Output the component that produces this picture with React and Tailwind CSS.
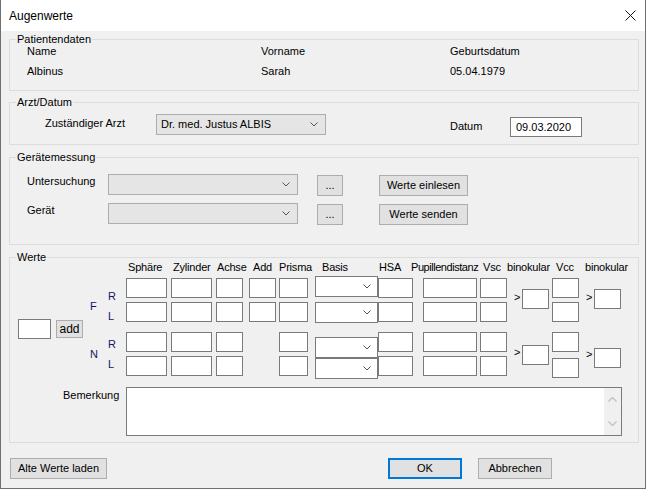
import React from 'react';

const Box = ({ className = '' }) => (
  <div className={`h-[20px] border border-[#7a7a7a] bg-white ${className}`} />
);

function Chevron({ color = '#555555' }) {
  return (
    <svg width="8" height="5" viewBox="0 0 8 5" className="shrink-0">
      <path d="M0.5 0.5 L4 4 L7.5 0.5" fill="none" stroke={color} strokeWidth="1" />
    </svg>
  );
}

function Combo({ className = '', children }) {
  // grey dropdown (WinForms ComboBox, DropDownList style)
  return (
    <div className={`flex items-center justify-between border border-[#adadad] bg-[#e5e5e5] pl-[4px] pr-[7px] ${className}`}>
      <span className="truncate">{children}</span>
      <Chevron />
    </div>
  );
}

function WhiteCombo({ className = '' }) {
  return (
    <div className={`flex h-[21px] w-[63px] items-center justify-end border border-[#7a7a7a] bg-white pr-[6px] ${className}`}>
      <Chevron />
    </div>
  );
}

function Btn({ className = '', children }) {
  return (
    <button className={`flex items-center justify-center border border-[#adadad] bg-[#e1e1e1] leading-[13px] ${className}`}>
      {children}
    </button>
  );
}

function Group({ label, className = '', children }) {
  return (
    <div className={`relative ml-[8px] w-[630px] border border-[#dcdcdc] ${className}`}>
      <span className="absolute -top-[7px] left-[6px] bg-[#f0f0f0] px-[1px] leading-[13px]">{label}</span>
      {children}
    </div>
  );
}

const HEADERS = [
  ['Sphäre', 'w-[45px]'],
  ['Zylinder', 'w-[44px]'],
  ['Achse', 'w-[36px]'],
  ['Add', 'w-[26px]'],
  ['Prisma', 'w-[43px]'],
  ['Basis', 'w-[57px]'],
  ['HSA', 'w-[32px]'],
  ['Pupillendistanz', 'w-[72px] tracking-[-0.45px]'],
  ['Vsc', 'w-[24px]'],
  ['binokular', 'w-[49px]'],
  ['Vcc', 'w-[29px]'],
  ['binokular', 'w-[40px]'],
];

// four-row column of text boxes (F R, F L, N R, N L)
function Col4({ className }) {
  return (
    <div className={`flex flex-col ${className}`}>
      <Box className="mt-[2px]" />
      <Box className="mt-[4px]" />
      <Box className="mt-[10px]" />
      <Box className="mt-[4px]" />
    </div>
  );
}

function Werte() {
  return (
    <>
      <div className="mt-[3px] flex whitespace-nowrap leading-[13px] tracking-[-0.2px]">
        <div className="w-[118px]" />
        {HEADERS.map(([h, w], i) => (
          <span key={i} className={w}>{h}</span>
        ))}
      </div>

      <div className="mt-[2px] flex h-[103px]">
        <div className="ml-[8px] mt-[43px] h-[20px] w-[33px] border border-[#7a7a7a] bg-white" />
        <Btn className="ml-[5px] mt-[44px] h-[18px] w-[27px] text-[12px]">add</Btn>

        <div className="ml-[7px] flex w-[18px] flex-col leading-[13px] text-[#15156a]">
          <span className="mt-[24px]">F</span>
          <span className="mt-[35px]">N</span>
        </div>
        <div className="flex w-[18px] flex-col leading-[13px] text-[#15156a]">
          <span className="mt-[14px]">R</span>
          <span className="mt-[7px]">L</span>
          <span className="mt-[15px]">R</span>
          <span className="mt-[7px]">L</span>
        </div>

        <Col4 className="w-[41px]" />
        <Col4 className="ml-[4px] w-[41px]" />
        <Col4 className="ml-[4px] w-[27px]" />
        <div className="ml-[6px] flex w-[27px] flex-col">
          <Box className="mt-[2px]" />
          <Box className="mt-[4px]" />
        </div>
        <Col4 className="ml-[3px] w-[29px]" />
        <div className="ml-[7px] flex w-[63px] flex-col">
          <WhiteCombo />
          <WhiteCombo className="mt-[5px]" />
          <WhiteCombo className="mt-[14px]" />
          <WhiteCombo />
        </div>
        <Col4 className="w-[35px]" />
        <Col4 className="ml-[10px] w-[54px]" />
        <Col4 className="ml-[3px] w-[27px]" />

        <div className="flex w-[15px] flex-col pl-[7px] leading-[13px]">
          <span className="mt-[15px]">&gt;</span>
          <span className="mt-[42px]">&gt;</span>
        </div>
        <div className="flex w-[27px] flex-col">
          <Box className="mt-[13px]" />
          <Box className="mt-[36px]" />
        </div>
        <div className="ml-[3px] flex w-[27px] flex-col">
          <Box className="mt-[2px]" />
          <Box className="mt-[4px]" />
          <Box className="mt-[10px]" />
          <Box className="mt-[6px]" />
        </div>
        <div className="flex w-[15px] flex-col pl-[7px] leading-[13px]">
          <span className="mt-[15px]">&gt;</span>
          <span className="mt-[44px]">&gt;</span>
        </div>
        <div className="flex w-[27px] flex-col">
          <Box className="mt-[13px]" />
          <Box className="mt-[39px]" />
        </div>
      </div>

      <div className="mt-[8px] flex">
        <span className="ml-[53px] mt-[2px] w-[63px] leading-[13px]">Bemerkung</span>
        <div className="flex h-[49px] w-[496px] justify-end border border-[#7a7a7a] bg-white">
          <div className="flex w-[17px] flex-col items-center justify-between bg-[#f0f0f0] py-[9px]">
            <svg width="9" height="5" viewBox="0 0 9 5">
              <path d="M0.5 4.5 L4.5 0.5 L8.5 4.5" fill="none" stroke="#c2c2c2" strokeWidth="1.4" />
            </svg>
            <svg width="9" height="5" viewBox="0 0 9 5">
              <path d="M0.5 0.5 L4.5 4.5 L8.5 0.5" fill="none" stroke="#c2c2c2" strokeWidth="1.4" />
            </svg>
          </div>
        </div>
      </div>
    </>
  );
}

export default function App() {
  return (
    <div className="h-[490px] w-[647px] bg-white font-['Liberation_Sans',Arial,sans-serif] text-[11px] text-black">
      <div className="flex h-[489px] w-[646px] flex-col border-x border-b border-[#707070] bg-[#f0f0f0]">
        {/* Title bar */}
        <div className="flex h-[31px] shrink-0 items-center justify-between bg-white pl-[8px] pr-[9px]">
          <span className="text-[12px]">Augenwerte</span>
          <svg width="11" height="11" viewBox="0 0 11 11">
            <path d="M0.5 0.5 L10.5 10.5 M10.5 0.5 L0.5 10.5" stroke="#111" strokeWidth="1" />
          </svg>
        </div>

        <Group label="Patientendaten" className="mt-[8px] h-[52px]">
          <div className="grid grid-cols-[234px_189px_1fr] gap-y-[7px] pl-[17px] pt-[5px] leading-[13px]">
            <span>Name</span>
            <span>Vorname</span>
            <span>Geburtsdatum</span>
            <span>Albinus</span>
            <span>Sarah</span>
            <span>05.04.1979</span>
          </div>
        </Group>

        <Group label="Arzt/Datum" className="mt-[11px] h-[43px]">
          <div className="flex items-start leading-[13px]">
            <span className="ml-[35px] mt-[14px] w-[111px]">Zuständiger Arzt</span>
            <Combo className="mt-[11px] h-[21px] w-[170px]">Dr. med. Justus ALBIS</Combo>
            <span className="ml-[124px] mt-[17px] w-[60px]">Datum</span>
            <div className="mt-[14px] flex h-[20px] w-[72px] items-center border border-[#7a7a7a] bg-white pl-[5px]">
              09.03.2020
            </div>
          </div>
        </Group>

        <Group label="Gerätemessung" className="mt-[12px] h-[88px]">
          <div className="flex flex-col leading-[13px]">
            <div className="mt-[16px] flex h-[22px] items-start">
              <span className="ml-[17px] mt-[1px] w-[81px]">Untersuchung</span>
              <Combo className="h-[21px] w-[190px]" />
              <Btn className="ml-[19px] mt-[1px] h-[21px] w-[26px]">...</Btn>
              <Btn className="ml-[36px] mt-[1px] h-[21px] w-[89px]">Werte einlesen</Btn>
            </div>
            <div className="mt-[7px] flex h-[22px] items-start">
              <span className="ml-[17px] mt-[1px] w-[81px]">Gerät</span>
              <Combo className="h-[21px] w-[190px]" />
              <Btn className="ml-[19px] mt-[1px] h-[21px] w-[26px]">...</Btn>
              <Btn className="ml-[36px] mt-[1px] h-[21px] w-[89px]">Werte senden</Btn>
            </div>
          </div>
        </Group>

        <Group label="Werte" className="mt-[12px] h-[186px]">
          <Werte />
        </Group>

        <div className="mt-[15px] flex">
          <Btn className="ml-[9px] h-[21px] w-[97px]">Alte Werte laden</Btn>
          <button className="ml-[281px] flex h-[21px] w-[74px] items-center justify-center border-2 border-[#0078d7] bg-[#e1e1e1] leading-[13px]">
            OK
          </button>
          <Btn className="ml-[16px] h-[21px] w-[74px]">Abbrechen</Btn>
        </div>
      </div>
    </div>
  );
}
